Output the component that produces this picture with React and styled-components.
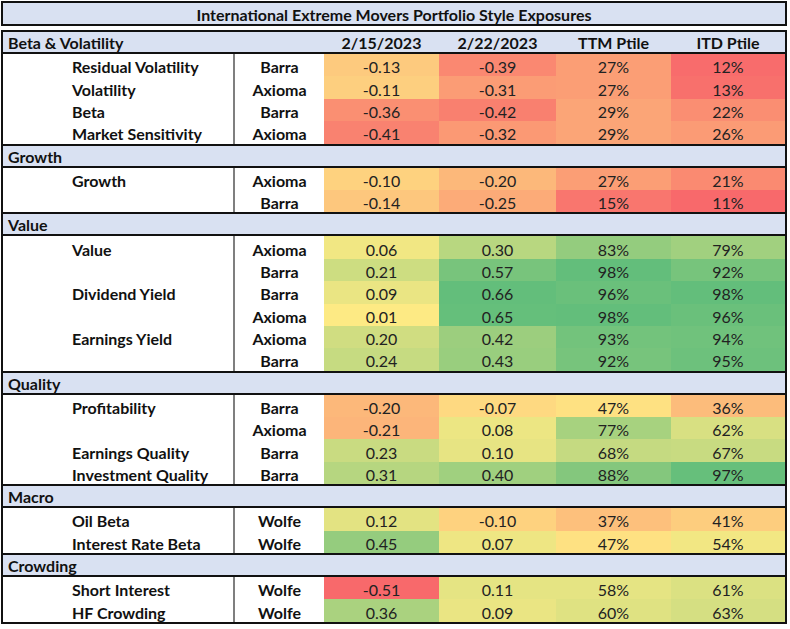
import React from "react";
import styled, { createGlobalStyle } from "styled-components";

const sections = [
    {
        name: "Beta & Volatility",
        rows: [
            ["Residual Volatility", "Barra", -0.13, -0.39, 27, 12],
            ["Volatility", "Axioma", -0.11, -0.31, 27, 13],
            ["Beta", "Barra", -0.36, -0.42, 29, 22],
            ["Market Sensitivity", "Axioma", -0.41, -0.32, 29, 26],
        ],
    },
    {
        name: "Growth",
        rows: [
            ["Growth", "Axioma", -0.1, -0.2, 27, 21],
            ["", "Barra", -0.14, -0.25, 15, 11],
        ],
    },
    {
        name: "Value",
        rows: [
            ["Value", "Axioma", 0.06, 0.3, 83, 79],
            ["", "Barra", 0.21, 0.57, 98, 92],
            ["Dividend Yield", "Barra", 0.09, 0.66, 96, 98],
            ["", "Axioma", 0.01, 0.65, 98, 96],
            ["Earnings Yield", "Axioma", 0.2, 0.42, 93, 94],
            ["", "Barra", 0.24, 0.43, 92, 95],
        ],
    },
    {
        name: "Quality",
        rows: [
            ["Profitability", "Barra", -0.2, -0.07, 47, 36],
            ["", "Axioma", -0.21, 0.08, 77, 62],
            ["Earnings Quality", "Barra", 0.23, 0.1, 68, 67],
            ["Investment Quality", "Barra", 0.31, 0.4, 88, 97],
        ],
    },
    {
        name: "Macro",
        rows: [
            ["Oil Beta", "Wolfe", 0.12, -0.1, 37, 41],
            ["Interest Rate Beta", "Wolfe", 0.45, 0.07, 47, 54],
        ],
    },
    {
        name: "Crowding",
        rows: [
            ["Short Interest", "Wolfe", -0.51, 0.11, 58, 61],
            ["HF Crowding", "Wolfe", 0.36, 0.09, 60, 63],
        ],
    },
];

const RED = [248, 105, 107];
const YELLOW = [255, 235, 132];
const GREEN = [99, 190, 123];

// excel style 3 colour scale
const scaleColor = (v, min, mid, max) => {
    let to;
    let t;
    if (v < mid) {
        to = RED;
        t = (mid - v) / (mid - min);
    } else {
        to = GREEN;
        t = (v - mid) / (max - mid);
    }
    t = Math.max(0, Math.min(1, t));
    const c = YELLOW.map((f, i) => Math.round(f + (to[i] - f) * t));
    return `rgb(${c[0]}, ${c[1]}, ${c[2]})`;
};

const exposureColor = (v) => scaleColor(v, -0.51, 0, 0.66);
const ptileColor = (v) => scaleColor(v, 11, 50, 98);

export default function App() {
    return (
        <>
            <GlobalStyle />
            <Page>
                <Title>International Extreme Movers Portfolio Style Exposures</Title>
                <Table>
                    {sections.map((section, si) => (
                        <Section key={section.name}>
                            <HeaderRow>
                                <HeaderName>{section.name}</HeaderName>
                                <HeaderLabel />
                                {si === 0 && (
                                    <>
                                        <HeaderLabel>2/15/2023</HeaderLabel>
                                        <HeaderLabel>2/22/2023</HeaderLabel>
                                        <HeaderLabel>TTM Ptile</HeaderLabel>
                                        <HeaderLabel>ITD Ptile</HeaderLabel>
                                    </>
                                )}
                            </HeaderRow>
                            {section.rows.map((row, ri) => (
                                <Row key={ri}>
                                    <NameCell>{row[0]}</NameCell>
                                    <SourceCell>{row[1]}</SourceCell>
                                    <ValueCell
                                        style={{ background: exposureColor(row[2]) }}
                                    >
                                        {row[2].toFixed(2)}
                                    </ValueCell>
                                    <ValueCell
                                        style={{ background: exposureColor(row[3]) }}
                                    >
                                        {row[3].toFixed(2)}
                                    </ValueCell>
                                    <ValueCell
                                        style={{ background: ptileColor(row[4]) }}
                                    >
                                        {row[4]}%
                                    </ValueCell>
                                    <ValueCell
                                        style={{ background: ptileColor(row[5]) }}
                                    >
                                        {row[5]}%
                                    </ValueCell>
                                </Row>
                            ))}
                        </Section>
                    ))}
                </Table>
            </Page>
        </>
    );
}

// --- STYLES ---

const GlobalStyle = createGlobalStyle`
    body {
        margin: 0;
        background: #ffffff;
        font-family: Lato, "Liberation Sans", sans-serif;
    }
`;

const Page = styled.div`
    width: 786px;
    padding: 1px 0 0 1px;
    display: flex;
    flex-direction: column;
    gap: 4px;
`;

const Title = styled.div`
    height: 25px;
    box-sizing: border-box;
    border: 2px solid #111;
    background: #d9e1f2;
    display: flex;
    align-items: center;
    justify-content: center;
    padding-top: 1px;
    font-weight: 700;
    font-size: 16px;
    color: #111;
`;

const Table = styled.div`
    border: 2px solid #111;
    display: flex;
    flex-direction: column;
`;

const Section = styled.div`
    border-bottom: 2px solid #111;
    &:last-child {
        border-bottom: none;
    }
`;

const cols = "232px 89px 115px 117px 115px 1fr";

const HeaderRow = styled.div`
    display: grid;
    grid-template-columns: ${cols};
    height: 20px;
    align-items: center;
    background: #d9e1f2;
    border-bottom: 2px solid #111;
    font-weight: 700;
    font-size: 16px;
    line-height: 20px;
    color: #111;
`;

const HeaderName = styled.div`
    padding: 1px 0 0 5px;
    white-space: nowrap;
`;

const HeaderLabel = styled.div`
    padding-top: 1px;
    text-align: center;
`;

const Row = styled.div`
    display: grid;
    grid-template-columns: ${cols};
    height: 22.4px;
    font-size: 16px;
`;

const NameCell = styled.div`
    box-sizing: border-box;
    border-right: 2px solid #7f7f7f;
    padding: 3px 0 0 69px;
    font-weight: 700;
    color: #111;
    display: flex;
    align-items: center;
    white-space: nowrap;
`;

const SourceCell = styled.div`
    box-sizing: border-box;
    padding-top: 3px;
    font-weight: 700;
    color: #111;
    display: flex;
    align-items: center;
    justify-content: center;
`;

const ValueCell = styled.div`
    box-sizing: border-box;
    padding-top: 3px;
    color: #222;
    display: flex;
    align-items: center;
    justify-content: center;
`;
